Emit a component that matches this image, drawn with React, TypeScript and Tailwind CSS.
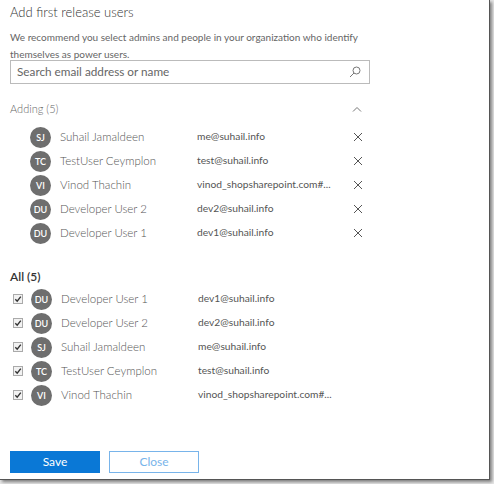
import React from "react";

type User = { initials: string; name: string; email: string };

const adding: User[] = [
  { initials: "SJ", name: "Suhail Jamaldeen", email: "me@suhail.info" },
  { initials: "TC", name: "TestUser Ceymplon", email: "test@suhail.info" },
  { initials: "VI", name: "Vinod Thachin", email: "vinod_shopsharepoint.com#..." },
  { initials: "DU", name: "Developer User 2", email: "dev2@suhail.info" },
  { initials: "DU", name: "Developer User 1", email: "dev1@suhail.info" },
];

const all: User[] = [
  { initials: "DU", name: "Developer User 1", email: "dev1@suhail.info" },
  { initials: "DU", name: "Developer User 2", email: "dev2@suhail.info" },
  { initials: "SJ", name: "Suhail Jamaldeen", email: "me@suhail.info" },
  { initials: "TC", name: "TestUser Ceymplon", email: "test@suhail.info" },
  { initials: "VI", name: "Vinod Thachin", email: "vinod_shopsharepoint.com#..." },
];

const Avatar = ({ initials }: { initials: string }) => (
  <div className="w-[21px] h-[21px] rounded-full bg-[#6e6e6e] flex items-center justify-center shrink-0">
    <span className="text-[9px] font-semibold text-white leading-none">{initials}</span>
  </div>
);

const UserCells = ({ user }: { user: User }) => (
  <>
    <span className="w-[146px] text-[11.5px] font-light text-[#555] pl-[9px] whitespace-nowrap">
      {user.name}
    </span>
    <span className="w-[150px] text-[10.25px] text-[#555] whitespace-nowrap">
      {user.email}
    </span>
  </>
);

const App = () => {
  return (
    <div
      className="w-[494px] h-[484px] bg-[#e6e6e6]"
      style={{ fontFamily: 'Lato, "Open Sans", sans-serif' }}
    >
      <div className="w-[490px] h-[480px] bg-white border-r border-b border-[#555] shadow-[2px_2px_3px_rgba(0,0,0,0.45)] flex flex-col pl-[10px]">
        <h1 className="mt-[2px] h-5 text-[13px] leading-5 font-light text-[#333]">
          Add first release users
        </h1>

        <p className="mt-[7px] w-[380px] text-[10px] leading-[17px] text-[#666]">
          We recommend you select admins and people in your organization who identify
          themselves as power users.
        </p>

        <div className="mt-[-3px] w-[360px] h-6 border border-[#bbb] flex items-center justify-between pl-[6px] pr-[8px]">
          <span className="text-[11.75px] text-[#666]">Search email address or name</span>
          <svg width="12" height="12" viewBox="0 0 12 12" fill="none" stroke="#777" strokeWidth="1">
            <circle cx="7.5" cy="4.5" r="3.5" />
            <line x1="5" y1="7" x2="1" y2="11" />
          </svg>
        </div>

        <div className="mt-[17px] w-[360px] h-4 flex items-center justify-between">
          <span className="text-[11px] font-light text-[#666]">Adding (5)</span>
          <svg className="mr-[8px]" width="10" height="6" viewBox="0 0 10 6" fill="none" stroke="#777" strokeWidth="1">
            <polyline points="1,5.5 5,1.5 9,5.5" />
          </svg>
        </div>

        <div className="mt-[8px] flex flex-col">
          {adding.map((u, i) => (
            <div key={i} className="h-6 flex items-center pl-5 w-[360px]">
              <Avatar initials={u.initials} />
              <UserCells user={u} />
              <svg className="ml-[6px]" width="10" height="10" viewBox="0 0 10 10" stroke="#555" strokeWidth="1">
                <line x1="1" y1="1" x2="9" y2="9" />
                <line x1="9" y1="1" x2="1" y2="9" />
              </svg>
            </div>
          ))}
        </div>

        <div className="mt-[24px] h-4 flex items-center">
          <span className="text-[12px] font-semibold text-[#333]">All (5)</span>
        </div>

        <div className="mt-[2px] flex flex-col">
          {all.map((u, i) => (
            <div key={i} className="h-6 flex items-center pl-[3px]">
              <svg className="mr-[8px]" width="10" height="10" viewBox="0 0 10 10">
                <rect x="0.5" y="0.5" width="9" height="9" fill="#f2f2f2" stroke="#aaa" />
                <polyline points="2.3,5.2 4.2,7.2 7.8,2.6" fill="none" stroke="#333" strokeWidth="1.4" />
              </svg>
              <Avatar initials={u.initials} />
              <UserCells user={u} />
            </div>
          ))}
        </div>

        <div className="mt-auto mb-[6px] flex gap-[9px]">
          <button className="w-[90px] h-[22px] bg-[#0a78d6] text-white text-[12px]">Save</button>
          <button className="w-[90px] h-[22px] border border-[#78b4ea] text-[#78b4ea] text-[12px] bg-white">
            Close
          </button>
        </div>
      </div>
    </div>
  );
};

export default App;
